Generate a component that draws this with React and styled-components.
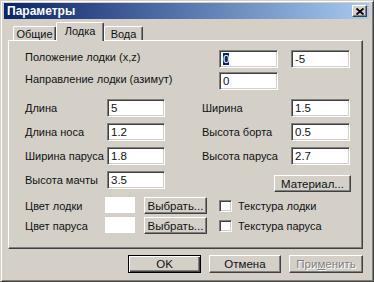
import React from 'react';
import styled, { createGlobalStyle } from 'styled-components';

// ==============================================
// ==============================================

const GlobalStyle = createGlobalStyle`
  html, body {
    margin: 0;
    padding: 0;
    background: #d4d0c8;
  }
  * {
    box-sizing: border-box;
  }
`;

// ==============================================
// ==============================================

const Window = styled.div`
  width: 374px;
  height: 282px;
  padding: 3px 4px 2px 3px;
  background: #d4d0c8;
  border: 1px solid;
  border-color: #d4d0c8 #404040 #404040 #d4d0c8;
  box-shadow: inset 1px 1px #ffffff, inset -1px -1px #808080;
  font-family: "Liberation Sans", Arial, sans-serif;
  font-size: 11px;
  color: #111111;
  display: flex;
  flex-direction: column;
`;

const TitleBar = styled.div`
  height: 16px;
  margin-top: -1px;
  display: flex;
  align-items: center;
  justify-content: space-between;
  padding: 0 2px 0 3px;
  background: linear-gradient(90deg, #0a246a, #a6caf0);
`;

const Title = styled.span`
  color: #ffffff;
  font-weight: bold;
  font-size: 12px;
`;

const CloseButton = styled.div`
  width: 15px;
  height: 12px;
  display: flex;
  align-items: center;
  justify-content: center;
  background: #d4d0c8;
  border: 1px solid;
  border-color: #ffffff #404040 #404040 #ffffff;
  box-shadow: inset -1px -1px #808080;
`;

// ==============================================
// ==============================================

const Body = styled.div`
  padding: 0 6px 0 4px;
`;

const TabStrip = styled.div`
  display: flex;
  align-items: flex-end;
  margin-top: 3px;
  padding-left: 5px;
  position: relative;
  z-index: 1;
`;

const Tab = styled.div`
  width: ${p => p.$width}px;
  height: ${p => (p.$active ? 19 : 14)}px;
  margin-bottom: ${p => (p.$active ? -1 : 0)}px;
  display: flex;
  align-items: center;
  justify-content: center;
  padding-bottom: ${p => (p.$active ? 2 : 0)}px;
  background: #d4d0c8;
  border-top: 1px solid #ffffff;
  border-left: 1px solid #ffffff;
  border-right: 1px solid #404040;
  border-radius: 2px 2px 0 0;
  box-shadow: inset -1px 0 #808080;
`;

const Panel = styled.div`
  height: 209px;
  border: 1px solid;
  border-color: #ffffff #404040 #404040 #ffffff;
  box-shadow: inset -1px -1px #808080;
  padding: 9px 0 0 16px;
`;

// ==============================================
// ==============================================

const TopGrid = styled.div`
  display: grid;
  grid-template-columns: 181px 59px 59px;
  grid-auto-rows: 18px;
  column-gap: 13px;
  row-gap: 4px;
`;

const SizeGrid = styled.div`
  display: grid;
  grid-template-columns: 82px 58px 126px 59px;
  grid-auto-rows: 18px;
  row-gap: 6px;
  margin-top: 9px;
`;

const ColorGrid = styled.div`
  display: grid;
  grid-template-columns: 80px 30px 63px auto;
  grid-auto-rows: 17px;
  row-gap: 3px;
  margin-top: 8px;
`;

const Label = styled.div`
  display: flex;
  align-items: ${p => (p.$top ? 'flex-start' : 'center')};
  padding-top: ${p => (p.$top ? 1 : 0)}px;
  padding-left: ${p => p.$indent || 0}px;
  white-space: nowrap;
`;

const Field = styled.div`
  height: 18px;
  background: #ffffff;
  border: 1px solid;
  border-color: #808080 #ffffff #ffffff #808080;
  box-shadow: inset 1px 1px #404040, inset -1px -1px #d4d0c8;
  padding: 1px 0 0 3px;
  line-height: 15px;
  font-size: 11.5px;
`;

const Selected = styled.span`
  background: #0a246a;
  color: #ffffff;
`;

const Button = styled.div`
  width: ${p => p.$width}px;
  height: ${p => p.$height || 17}px;
  display: flex;
  align-items: center;
  justify-content: center;
  background: #d4d0c8;
  border: 1px solid;
  border-color: ${p => (p.$default ? '#000000' : '#ffffff #404040 #404040 #ffffff')};
  box-shadow: ${p => (p.$default
    ? 'inset 1px 1px #ffffff, inset -1px -1px #404040, inset -2px -2px #808080'
    : 'inset -1px -1px #808080')};
  color: ${p => (p.$disabled ? '#808080' : '#111111')};
  text-shadow: ${p => (p.$disabled ? '1px 1px #ffffff' : 'none')};
  font-size: 11.5px;
  white-space: nowrap;
`;

const MaterialButton = styled(Button)`
  grid-column: 3 / 5;
  justify-self: end;
  margin-top: 4px;
  margin-right: -1px;
`;

const Swatch = styled.div`
  height: 16px;
  background: #ffffff;
`;

const ChooseButton = styled(Button)`
  margin-left: 9px;
`;

const CheckRow = styled.div`
  display: flex;
  align-items: center;
  gap: 6px;
  margin-left: 21px;
  white-space: nowrap;
`;

const CheckBox = styled.div`
  width: 13px;
  height: 12px;
  background: #ffffff;
  border: 1px solid;
  border-color: #808080 #ffffff #ffffff #808080;
  box-shadow: inset 1px 1px #404040, inset -1px -1px #d4d0c8;
`;

const ButtonRow = styled.div`
  display: flex;
  justify-content: flex-end;
  gap: 8px;
  margin-top: 6px;
`;

const Underline = styled.span`
  text-decoration: underline;
`;

// ==============================================
// ==============================================

const App = () => {
  return (
    <>
      <GlobalStyle />
      <Window>
        <TitleBar>
          <Title>Параметры</Title>
          <CloseButton>
            <svg width="8" height="7" viewBox="0 0 8 7">
              <path d="M0.5 0.5 L7.5 6.5 M7.5 0.5 L0.5 6.5" stroke="#000" strokeWidth="1.8" />
            </svg>
          </CloseButton>
        </TitleBar>
        <Body>
          <TabStrip>
            <Tab $width={43}>Общие</Tab>
            <Tab $width={48} $active>Лодка</Tab>
            <Tab $width={39}>Вода</Tab>
          </TabStrip>
          <Panel>
            <TopGrid>
              <Label $top>Положение лодки (x,z)</Label>
              <Field><Selected>0</Selected></Field>
              <Field>-5</Field>
              <Label $top>Направление лодки (азимут)</Label>
              <Field>0</Field>
            </TopGrid>
            <SizeGrid>
              <Label>Длина</Label>
              <Field>5</Field>
              <Label $indent={37}>Ширина</Label>
              <Field>1.5</Field>
              <Label>Длина носа</Label>
              <Field>1.2</Field>
              <Label $indent={37}>Высота борта</Label>
              <Field>0.5</Field>
              <Label>Ширина паруса</Label>
              <Field>1.8</Field>
              <Label $indent={37}>Высота паруса</Label>
              <Field>2.7</Field>
              <Label>Высота мачты</Label>
              <Field>3.5</Field>
              <MaterialButton $width={77}>Материал...</MaterialButton>
            </SizeGrid>
            <ColorGrid>
              <Label>Цвет лодки</Label>
              <Swatch />
              <ChooseButton $width={63}>Выбрать...</ChooseButton>
              <CheckRow><CheckBox />Текстура лодки</CheckRow>
              <Label>Цвет паруса</Label>
              <Swatch />
              <ChooseButton $width={63}>Выбрать...</ChooseButton>
              <CheckRow><CheckBox />Текстура паруса</CheckRow>
            </ColorGrid>
          </Panel>
          <ButtonRow>
            <Button $width={73} $height={18} $default>OK</Button>
            <Button $width={72} $height={18}>Отмена</Button>
            <Button $width={74} $height={18} $disabled>При<Underline>м</Underline>енить</Button>
          </ButtonRow>
        </Body>
      </Window>
    </>
  );
};

export default App;
